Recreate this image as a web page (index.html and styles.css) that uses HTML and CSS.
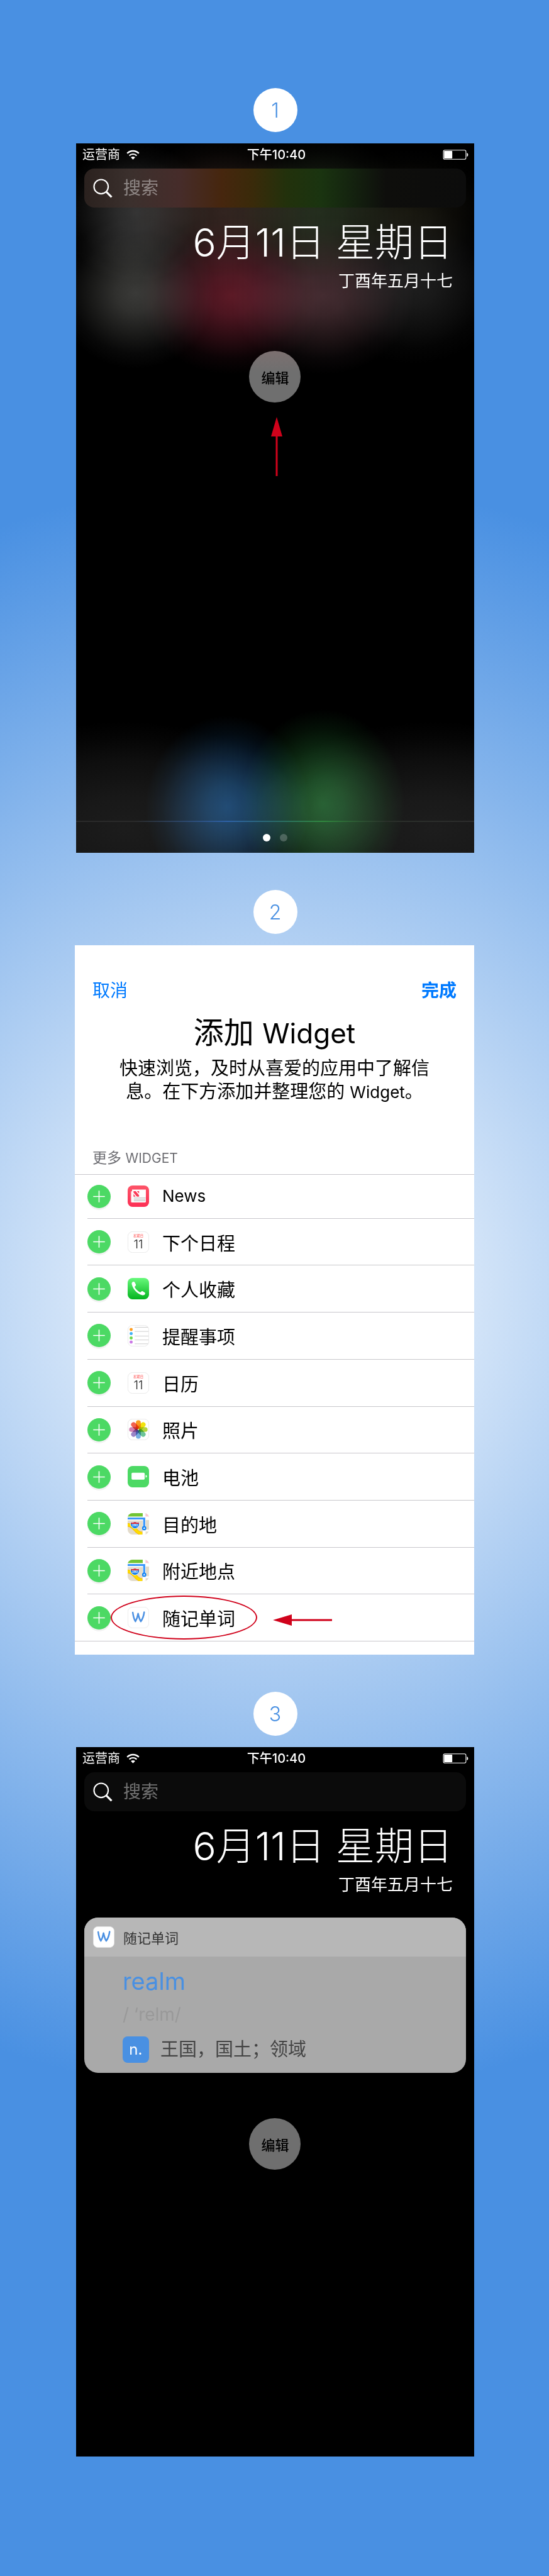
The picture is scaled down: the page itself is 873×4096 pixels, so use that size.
FILE: index.html
```html
<!DOCTYPE html>
<html lang="zh-CN">
<head>
<meta charset="utf-8">
<meta name="viewport" content="width=device-width, initial-scale=1">
<title>添加 Widget</title>
<link rel="stylesheet" href="styles.css">
</head>
<body>
<svg class="sprite" aria-hidden="true">
  <defs>
    <linearGradient id="g-news" x1="0" y1="0" x2="0" y2="1"><stop offset="0" stop-color="#fd5468"/><stop offset="1" stop-color="#fc2f55"/></linearGradient>
    <linearGradient id="g-phone" x1="0" y1="0" x2="0" y2="1"><stop offset="0" stop-color="#68f97c"/><stop offset="1" stop-color="#04b41f"/></linearGradient>
    <clipPath id="c-app"><rect width="44" height="44" rx="10"/></clipPath>
  </defs>
  <symbol id="wifi" viewBox="0 0 27 20">
    <path d="M1.6 7.2a16.8 16.8 0 0 1 23.8 0" fill="none" stroke="#fff" stroke-width="3"/>
    <path d="M6 11.8a10.6 10.6 0 0 1 15 0" fill="none" stroke="#fff" stroke-width="2.8"/>
    <path d="M9.2 15.6a6 6 0 0 1 8.6 0L13.5 20z" fill="#fff"/>
  </symbol>
  <symbol id="battery" viewBox="0 0 53 21">
    <rect x="1" y="1" width="47" height="19" rx="3" fill="none" stroke="#fff" stroke-width="1.4"/>
    <rect x="2.5" y="2.5" width="17" height="16" rx="1" fill="#fff"/>
    <path d="M50 6.5c3.400 1 3.400 7 0 8z" fill="#fff"/>
  </symbol>
  <symbol id="search" viewBox="0 0 40 40">
    <circle cx="16.500" cy="16.500" r="14.600" fill="none" stroke="#fff" stroke-width="2.800"/>
    <path d="M27 27l11 11" stroke="#fff" stroke-width="4"/>
  </symbol>
  <symbol id="plus" viewBox="0 0 48 48">
    <path d="M12 24h24M24 12v24" stroke="#fff" stroke-width="2"/>
  </symbol>
  <symbol id="word" viewBox="0 0 44 44">
    <rect x=".5" y=".5" width="43" height="43" rx="9.500" fill="#fff" stroke="#e6e6e6"/>
    <path d="M10.500 11.500c1 7 3 14.500 5.500 18.500c2.500-4 4.500-10 5.500-16c1.500 7 3 12 5.500 16c3-4 6-11 7-19" fill="none" stroke="#4a90e2" stroke-width="3.200" stroke-linecap="round" stroke-linejoin="round"/>
  </symbol>
  <symbol id="news" viewBox="0 0 44 44">
    <rect width="44" height="44" rx="10" fill="url(#g-news)"/>
    <path d="M6.500 12h4v23h-2a2 2 0 0 1-2-2z" fill="#fbd3d8"/>
    <path d="M9 8.500h28.500v24.500a2 2 0 0 1-2 2H9z" fill="#fff"/>
    <path d="M12 11.500h4.500l7 8.500v3H19l-7-8.500zM12 17.500l4.500 5.500H12zM19 11.500h4.500v5z" fill="#fb3b58"/>
    <path d="M26 25.500h11M12.500 25.500h24M12.500 28.500h24M12.500 31.500h24" stroke="#bfbfbf" stroke-width="1.500"/>
  </symbol>
  <symbol id="sheet" viewBox="0 0 44 44">
    <rect x=".5" y=".5" width="43" height="43" rx="9.500" fill="#fff" stroke="#e2e2e2"/>
  </symbol>
  <symbol id="phone" viewBox="0 0 44 44">
    <rect width="44" height="44" rx="10" fill="url(#g-phone)"/>
    <path d="M8.500 13c-.6-2.500.8-4.500 3-5.200c1.500-.5 2.500.2 3.300 1.700l2 4c.8 1.700-.3 2.600-1.700 3.800c-.8.700-.7 1.600 0 2.700c2 3.400 5.500 6.800 9.500 9c1.200.6 2 .6 2.700-.3c1.200-1.500 2.200-2.200 3.900-1.100l3.500 2.200c1.500 1 1.800 2 1.100 3.300c-1.300 2.500-3.600 3-6.500 2.200C19.500 32.500 11 23.500 8.500 13z" fill="#fff"/>
  </symbol>
  <symbol id="reminders" viewBox="0 0 44 44">
    <rect x=".5" y=".5" width="43" height="43" rx="9.500" fill="#fff" stroke="#e2e2e2"/>
    <path d="M14.500 4.500H42M14.500 13H43M14.500 22.500H43M14.500 30.500H43M14.500 38.500H42" stroke="#cbcbcb" stroke-width="1.200"/>
    <circle cx="7.200" cy="9" r="3.200" fill="#ff9d1e"/><circle cx="7.200" cy="17.500" r="3.200" fill="#3fb0f5"/>
    <circle cx="7.200" cy="26.500" r="3.200" fill="#6bd84a"/><circle cx="7.200" cy="35" r="3.200" fill="#cb78e6"/>
  </symbol>
  <symbol id="photos" viewBox="0 0 44 44">
    <rect x=".5" y=".5" width="43" height="43" rx="9.500" fill="#fff" stroke="#e2e2e2"/>
    <g class="petals">
      <rect x="17" y="3" width="10" height="18" rx="5" fill="#f99b20"/>
      <rect x="17" y="3" width="10" height="18" rx="5" fill="#f2e30c" transform="rotate(45 22 22)"/>
      <rect x="17" y="3" width="10" height="18" rx="5" fill="#b5d53c" transform="rotate(90 22 22)"/>
      <rect x="17" y="3" width="10" height="18" rx="5" fill="#6cc498" transform="rotate(135 22 22)"/>
      <rect x="17" y="3" width="10" height="18" rx="5" fill="#76aee0" transform="rotate(180 22 22)"/>
      <rect x="17" y="3" width="10" height="18" rx="5" fill="#9a84c6" transform="rotate(225 22 22)"/>
      <rect x="17" y="3" width="10" height="18" rx="5" fill="#d183b3" transform="rotate(270 22 22)"/>
      <rect x="17" y="3" width="10" height="18" rx="5" fill="#f2624f" transform="rotate(315 22 22)"/>
    </g>
  </symbol>
  <symbol id="power" viewBox="0 0 44 44">
    <rect width="44" height="44" rx="10" fill="#4cd964"/>
    <rect x="8" y="14" width="27" height="14" rx="2" fill="#fff"/>
    <path d="M37 18.500c3.500.5 3.500 5 0 5.500z" fill="#fff"/>
  </symbol>
  <symbol id="maps" viewBox="0 0 44 44">
    <g clip-path="url(#c-app)">
      <rect width="44" height="44" fill="#e3dccb"/>
      <rect width="32" height="8" fill="#72c536"/>
      <rect x="31" width="6" height="44" fill="#fff"/>
      <rect y="7" width="37" height="8" fill="#fff"/>
      <rect x="37" width="7" height="7" fill="#fac6d2"/>
      <rect x="37" y="7" width="7" height="7" fill="#fff"/>
      <rect x="37" y="34" width="7" height="4" fill="#fff"/>
      <path d="M-1 24c8 0 12 4 16 9c4 5 8 9 15 9" fill="none" stroke="#f5b400" stroke-width="7.500"/>
      <path d="M-1 24c8 0 12 4 16 9c4 5 8 9 15 9" fill="none" stroke="#ffdc00" stroke-width="5.500"/>
      <path d="M0 11h34v20" fill="none" stroke="#3b97fb" stroke-width="4.200"/>
      <circle cx="34" cy="31" r="4.400" fill="#1183f5"/>
      <path d="M34 28l1.800 4.500h-3.600z" fill="#fff"/>
      <path d="M6.500 18.500c3 1.200 5 .4 8.500-.8c3.500 1.200 5.500 2 8.500.8c1.800 7-1.500 12-8.500 13.300C8 30.500 4.700 25.500 6.500 18.500z" fill="#147ef0" stroke="#fff"/>
      <path d="M7 19c3 1 5 .2 8-.8c3 1 5 1.800 8 .8l.4 3H6.600z" fill="#d8303c"/>
    </g>
  </symbol>
</svg>

<main class="guide">
  <span class="step">1</span>
  <section class="phone phone-glow">
    <header class="status">
      <span class="carrier">运营商 <svg class="wifi"><use href="#wifi"/></svg></span>
      <time>下午10:40</time>
      <svg class="battery"><use href="#battery"/></svg>
    </header>
    <label class="search">
      <svg><use href="#search"/></svg>
      <input type="search" placeholder="搜索" aria-label="搜索">
    </label>
    <h2 class="date">6月11日 星期日</h2>
    <p class="lunar">丁酉年五月十七</p>
    <button class="edit" type="button">编辑</button>
    <svg class="arrow-up" viewBox="0 0 18 94" aria-hidden="true"><path d="M9 0l9 31h-7.500v63h-3V31H0z" fill="#d0021b"/></svg>
    <footer class="pager"><span class="dot dot-on"></span><span class="dot"></span></footer>
  </section>

  <span class="step">2</span>
  <section class="panel">
    <div class="bar">
      <button class="link" type="button">取消</button>
      <button class="link link-strong" type="button">完成</button>
    </div>
    <h1 class="title">添加 <span class="latin">Widget</span></h1>
    <p class="intro">快速浏览，及时从喜爱的应用中了解信<br>息。在下方添加并整理您的 <span class="latin">Widget</span>。</p>
    <h2 class="group">更多 <span class="latin">WIDGET</span></h2>
    <ul class="list">
      <li class="row"><button class="add" type="button" aria-label="添加 News"><svg><use href="#plus"/></svg></button><svg class="app"><use href="#news"/></svg><span class="latin">News</span></li>
      <li class="row"><button class="add" type="button" aria-label="添加下个日程"><svg><use href="#plus"/></svg></button><svg class="app" viewBox="0 0 44 44"><use href="#sheet"/><text class="cal-week" x="22" y="12" text-anchor="middle">星期日</text><text class="cal-day" x="22" y="35" text-anchor="middle">11</text></svg><span>下个日程</span></li>
      <li class="row"><button class="add" type="button" aria-label="添加个人收藏"><svg><use href="#plus"/></svg></button><svg class="app"><use href="#phone"/></svg><span>个人收藏</span></li>
      <li class="row"><button class="add" type="button" aria-label="添加提醒事项"><svg><use href="#plus"/></svg></button><svg class="app"><use href="#reminders"/></svg><span>提醒事项</span></li>
      <li class="row"><button class="add" type="button" aria-label="添加日历"><svg><use href="#plus"/></svg></button><svg class="app" viewBox="0 0 44 44"><use href="#sheet"/><text class="cal-week" x="22" y="12" text-anchor="middle">星期日</text><text class="cal-day" x="22" y="35" text-anchor="middle">11</text></svg><span>日历</span></li>
      <li class="row"><button class="add" type="button" aria-label="添加照片"><svg><use href="#plus"/></svg></button><svg class="app"><use href="#photos"/></svg><span>照片</span></li>
      <li class="row"><button class="add" type="button" aria-label="添加电池"><svg><use href="#plus"/></svg></button><svg class="app"><use href="#power"/></svg><span>电池</span></li>
      <li class="row"><button class="add" type="button" aria-label="添加目的地"><svg><use href="#plus"/></svg></button><svg class="app" viewBox="0 0 44 44"><use href="#maps"/><text class="route" x="15" y="27" text-anchor="middle">280</text></svg><span>目的地</span></li>
      <li class="row"><button class="add" type="button" aria-label="添加附近地点"><svg><use href="#plus"/></svg></button><svg class="app" viewBox="0 0 44 44"><use href="#maps"/><text class="route" x="15" y="27" text-anchor="middle">280</text></svg><span>附近地点</span></li>
      <li class="row"><button class="add" type="button" aria-label="添加随记单词"><svg><use href="#plus"/></svg></button><svg class="app"><use href="#word"/></svg><span>随记单词</span>
        <span class="ring"></span>
        <svg class="arrow-left" viewBox="0 0 94 18" aria-hidden="true"><path d="M0 9l30-9v7.500h64v3H30V18z" fill="#d0021b"/></svg>
      </li>
    </ul>
  </section>

  <span class="step">3</span>
  <section class="phone">
    <header class="status">
      <span class="carrier">运营商 <svg class="wifi"><use href="#wifi"/></svg></span>
      <time>下午10:40</time>
      <svg class="battery"><use href="#battery"/></svg>
    </header>
    <label class="search">
      <svg><use href="#search"/></svg>
      <input type="search" placeholder="搜索" aria-label="搜索">
    </label>
    <h2 class="date">6月11日 星期日</h2>
    <p class="lunar">丁酉年五月十七</p>
    <article class="card">
      <header class="card-head"><svg class="app"><use href="#word"/></svg><span>随记单词</span></header>
      <div class="card-body">
        <h3 class="word">realm</h3>
        <p class="sound">/ ‘relm/</p>
        <p class="sense"><span class="pos">n.</span><span>王国，国土；领域</span></p>
      </div>
    </article>
    <button class="edit" type="button">编辑</button>
  </section>
</main>
</body>
</html>
```
FILE: styles.css
```css
* { box-sizing: border-box; }

body {
  margin: 0;
  font-family: Inter, "Noto Sans CJK SC", sans-serif;
  background: #4990e2 radial-gradient(circle 1288px at 50% 50%, #fff, #4990e2);
}

h1, h2, h3, p, ul { margin: 0; padding: 0; font-weight: 400; }
button, input { font-family: inherit; border: 0; padding: 0; background: none; }
svg { display: block; flex: none; }
.sprite { position: absolute; width: 0; height: 0; }

.cal-week { font-size: 7px; fill: #ff4d4d; }
.cal-day { font-size: 25px; font-weight: 300; fill: #222; }
.route { font-size: 6px; font-weight: 700; fill: #fff; }
.petals rect { mix-blend-mode: multiply; }

.guide {
  display: flex;
  flex-direction: column;
  align-items: center;
  padding: 140px 0 190px 2px;
}

.step {
  display: grid;
  place-items: center;
  width: 70px;
  height: 70px;
  margin-bottom: 18px;
  border-radius: 50%;
  background: #fff;
  color: #4990e2;
  font-size: 32px;
  font-weight: 300;
}

.phone, .panel {
  display: flex;
  flex-direction: column;
  width: 72.7%;
  min-height: 1128px;
}
.phone { background: #000; color: #fff; padding: 0 13px; }
.phone + .step, .panel + .step { margin-top: 59px; }

.phone-glow {
  background-color: #000;
  background-blend-mode: screen;
  background-image:
    radial-gradient(120px 110px at 15% 110px, #333, #2a2a2a 25%, #151515 58%, #070707 80%, #000),
    radial-gradient(125px 120px at 15% 238px, #3a3a38, #30302e 25%, #181817 58%, #080808 80%, #000),
    radial-gradient(145px 125px at 39% 242px, #5c1a26, #4c1520 25%, #260a10 58%, #0c0305 80%, #000),
    radial-gradient(145px 125px at 62% 242px, #442c31, #382428 25%, #1c1214 58%, #090607 80%, #000),
    radial-gradient(140px 125px at 85% 225px, #1e1e1e, #191919 25%, #0d0d0d 58%, #040404 80%, #000),
    radial-gradient(150px 120px at 37% 110px, #322420, #2a1e1a 25%, #150f0d 58%, #070504 80%, #000),
    radial-gradient(150px 120px at 61% 110px, #242e1e, #1e2619 25%, #0f130c 58%, #050604 80%, #000),
    radial-gradient(130px 100px at 84% 110px, #17160e, #13120c 25%, #0a0906 58%, #030302 80%, #000),
    radial-gradient(300px 170px at 12% 1090px, #1c1c1c, #181818 30%, #0e0e0e 65%, #050505 85%, #000),
    radial-gradient(300px 170px at 90% 1090px, #1d1d1d, #191919 30%, #0e0e0e 65%, #050505 85%, #000),
    radial-gradient(130px 145px at 38% 1055px, #13406c, #103558 25%, #091c2f 58%, #030b12 80%, #000),
    radial-gradient(130px 150px at 62% 1050px, #1c5828, #174821 25%, #0c2711 58%, #041006 80%, #000);
}

.status {
  display: grid;
  grid-template-columns: 1fr auto 1fr;
  align-items: center;
  height: 40px;
  padding-bottom: 5px;
  margin-right: -4px;
  font-size: 20px;
  line-height: 24px;
}
.status time { font-weight: 500; }
.carrier { display: flex; align-items: center; gap: 10px; margin-left: -3px; }
.wifi { width: 21px; height: 16px; }
.battery { width: 41px; height: 16px; justify-self: end; }

.search {
  display: flex;
  align-items: center;
  gap: 17px;
  height: 62px;
  padding: 0 14px;
  border-radius: 16px;
  background: #0b0b0b;
}
.phone-glow .search {
  background: linear-gradient(90deg, #2a211e, #3b302d 12%, #462c2a 25%, #46260e 36%, #3a2a0a 44%, #22310c 53%, #1a3410 62%, #14230f 70%, #0e0e0c 79%, #0c0c0c);
}
.search svg { width: 31px; height: 31px; }
.search input {
  flex: 1;
  min-width: 0;
  height: 100%;
  color: #fff;
  font-size: 28px;
  outline: 0;
}
.search input::placeholder { color: rgba(255, 255, 255, .42); opacity: 1; }

.date {
  margin: 20px 21px 0 0;
  font-size: 62px;
  font-weight: 300;
  line-height: 72px;
  text-align: right;
}
.lunar {
  margin: 9px 21px 0 0;
  font-size: 26px;
  line-height: 32px;
  text-align: right;
}

.edit {
  align-self: center;
  width: 82px;
  height: 82px;
  border-radius: 50%;
  background: #6f6f6f;
  color: #000;
  font-size: 22px;
  font-weight: 500;
}
.lunar + .edit { margin-top: 95px; background: linear-gradient(#7c7070, #6f6f6f 40%); }
.card + .edit { margin-top: 72px; }

.arrow-up { align-self: center; width: 18px; height: 94px; margin: 23px 0 0 5px; }

.pager {
  display: flex;
  justify-content: center;
  align-items: center;
  gap: 15px;
  height: 51px;
  margin: auto -13px 0;
  border-top: 2px solid;
  border-image: linear-gradient(90deg, #2a2a2a 15%, #2e62a8 38%, #2a6a6a 50%, #30883e 62%, #2a2f2a 78%, #2c2c2c) 1;
}
.dot { width: 12px; height: 12px; border-radius: 50%; background: rgba(255, 255, 255, .22); }
.dot-on { background: #fff; }

.panel {
  width: 72.9%;
  margin-right: 2px;
  padding-bottom: 21px;
  background: #fff;
  color: #000;
  font-size: 29px;
}
.bar { display: flex; justify-content: space-between; padding: 53px 28px 0; }
.link { color: #007aff; font-size: 28px; line-height: 38px; }
.link-strong { font-weight: 700; }
.latin { font-size: 26px; line-height: 1; }
.title { margin-top: 18px; font-size: 48px; line-height: 60px; text-align: center; }
.title .latin { font-size: 44px; }
.intro { margin-top: 8px; line-height: 37px; text-align: center; }
.group { margin: 72px 28px 11px; color: #6d6d72; font-size: 23px; line-height: 30px; }
.group .latin { font-size: 21px; }

.list {
  flex: 1;
  display: flex;
  flex-direction: column;
  list-style: none;
  border-top: 1px solid #c8c7cc;
  border-bottom: 1px solid #c8c7cc;
}
.row {
  position: relative;
  flex: 1;
  display: flex;
  align-items: center;
  margin-left: 20px;
}
.row + .row { border-top: 1px solid #c8c7cc; }
.add {
  width: 37px;
  height: 37px;
  margin-right: 27px;
  border-radius: 50%;
  background: #4cd964;
  box-shadow: 0 3px 0 #f2f2f2;
}
.add svg { width: 37px; height: 37px; }
.app { width: 34px; height: 34px; }
.row .app { margin-right: 21px; }

.ring {
  position: absolute;
  left: 37px;
  top: 2px;
  width: 233px;
  height: 70px;
  border: 2px solid #d0021b;
  border-radius: 50%;
}
.arrow-left { position: absolute; left: 295px; top: 32px; width: 94px; height: 18px; }

.card { margin-top: 36px; border-radius: 22px; overflow: hidden; background: #a9a9a9; }
.card-head {
  display: flex;
  align-items: center;
  gap: 14px;
  height: 62px;
  padding: 0 14px;
  background: #b7b7b7;
  color: #333;
  font-size: 22px;
}
.card-body { padding: 14px 14px 16px 61px; }
.word { color: #4990e2; font-size: 38px; line-height: 50px; }
.sound { margin-top: 8px; color: #999; font-size: 28px; line-height: 40px; }
.sense { display: flex; align-items: center; gap: 18px; margin-top: 15px; color: #444; font-size: 29px; line-height: 42px; }
.pos {
  width: 42px;
  height: 42px;
  border-radius: 8px;
  background: #4990e2;
  color: #fff;
  font-size: 24px;
  text-align: center;
}
```
